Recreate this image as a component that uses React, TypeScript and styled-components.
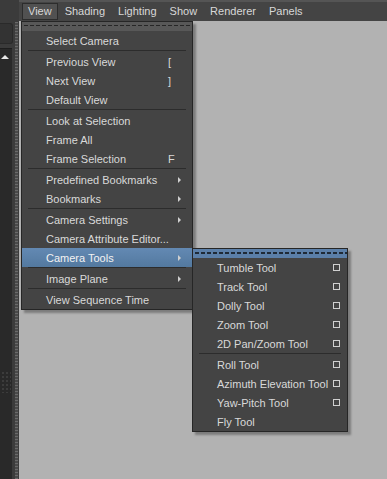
import styled, { createGlobalStyle } from 'styled-components';

const GlobalStyle = createGlobalStyle`
  html, body {
    margin: 0;
    padding: 0;
    background: #b2b2b2;
  }
  body {
    font-family: "Liberation Sans", Arial, sans-serif;
    font-size: 11px;
  }
`;

const Page = styled.div`
  position: relative;
  display: flex;
  width: 387px;
  height: 479px;
  overflow: hidden;
`;

const Dock = styled.div`
  display: flex;
  width: 19px;
  flex-shrink: 0;
  background: #3b3b3b;
`;

const DockColumn = styled.div`
  display: flex;
  flex-direction: column;
  width: 12px;
`;

const DockTop = styled.div`
  height: 23px;
`;

const DockButton = styled.div`
  height: 19px;
  margin-right: -1px;
  background: #333333;
  border: 1px solid #2a2a2a;
  border-left: none;
  border-radius: 0 3px 3px 0;
`;

const ScrollPanel = styled.div`
  flex: 1;
  margin-top: 4px;
  background: #292929;
  border-top: 1px solid #1e1e1e;
  display: flex;
  flex-direction: column;
  align-items: center;
  padding-top: 6px;
`;

const UpArrow = styled.div`
  width: 0;
  height: 0;
  margin-left: -3px;
  border-left: 4px solid transparent;
  border-right: 4px solid transparent;
  border-bottom: 4px solid #e8e8e8;
`;

const DotGrid = styled.div`
  margin-top: 312px;
  width: 10px;
  height: 22px;
  background-image: radial-gradient(#3c3c3c 0.8px, transparent 0.9px);
  background-size: 4px 4px;
`;

const Grip = styled.div`
  width: 3px;
  margin-left: 3px;
  margin-top: 22px;
  background-color: #4a4a4a;
  background-image: repeating-linear-gradient(
    to bottom,
    #6a6a6a 0px,
    #6a6a6a 1px,
    transparent 1px,
    transparent 3px
  );
`;

const Main = styled.div`
  flex: 1;
  display: flex;
  flex-direction: column;
`;

const MenuBar = styled.div`
  height: 21px;
  display: flex;
  align-items: center;
  gap: 1px;
  padding-left: 3px;
  background: #444444;
  border-top: 2px solid #555555;
  box-sizing: border-box;
`;

const BarItem = styled.div<{ $active?: boolean }>`
  height: 15px;
  line-height: 15px;
  padding: 0 5px;
  color: #d8d8d8;
  font-size: 11px;
  border: 1px solid ${(p) => (p.$active ? '#2c2c2c' : 'transparent')};
  background: ${(p) => (p.$active ? '#515151' : 'transparent')};
`;

const Viewport = styled.div`
  flex: 1;
  background: #b2b2b2;
`;

const Menu = styled.div<{ $left: number; $top: number; $width: number }>`
  position: absolute;
  left: ${(p) => p.$left}px;
  top: ${(p) => p.$top}px;
  width: ${(p) => p.$width}px;
  background: #444444;
  border: 1px solid #262626;
  box-shadow: 3px 3px 2px rgba(0, 0, 0, 0.3);
  display: flex;
  flex-direction: column;
  box-sizing: border-box;
`;

const TearOff = styled.div<{ $blue?: boolean }>`
  height: 9px;
  background-color: ${(p) => (p.$blue ? '#5b7fa8' : '#585858')};
  background-image: repeating-linear-gradient(
    to right,
    ${(p) => (p.$blue ? '#1f2a36' : '#262626')} 0px,
    ${(p) => (p.$blue ? '#1f2a36' : '#262626')} 4px,
    transparent 4px,
    transparent 6px
  );
  background-size: 100% ${(p) => (p.$blue ? 2 : 1)}px;
  background-position: 2px 3px;
  background-repeat: no-repeat;
`;

const Row = styled.div<{ $hot?: boolean; $indent: number }>`
  height: 19px;
  display: flex;
  align-items: center;
  padding-left: ${(p) => p.$indent}px;
  font-size: 11px;
  background: ${(p) => (p.$hot ? 'linear-gradient(#6389b3, #53799f)' : 'transparent')};
  color: ${(p) => (p.$hot ? '#f2f2f2' : '#d9d9d9')};
`;

const Label = styled.span`
  flex: 1;
  white-space: nowrap;
`;

const Shortcut = styled.span`
  width: 24px;
  color: #d9d9d9;
`;

const SubArrow = styled.span`
  width: 0;
  height: 0;
  margin-right: 11px;
  border-top: 3px solid transparent;
  border-bottom: 3px solid transparent;
  border-left: 3px solid #d0d0d0;
`;

const OptionBox = styled.span`
  width: 5px;
  height: 5px;
  margin-right: 7px;
  margin-left: 4px;
  border: 1px solid #d0d0d0;
`;

const Separator = styled.div<{ $inset: number }>`
  height: 2px;
  margin: 0 ${(p) => p.$inset}px;
  border-top: 1px solid #2c2c2c;
  box-sizing: border-box;
`;

type Entry =
  | { kind: 'sep' }
  | { kind: 'item'; label: string; key?: string; sub?: boolean; box?: boolean; hot?: boolean };

const viewMenu: Entry[] = [
  { kind: 'item', label: 'Select Camera' },
  { kind: 'sep' },
  { kind: 'item', label: 'Previous View', key: '[' },
  { kind: 'item', label: 'Next View', key: ']' },
  { kind: 'item', label: 'Default View' },
  { kind: 'sep' },
  { kind: 'item', label: 'Look at Selection' },
  { kind: 'item', label: 'Frame All' },
  { kind: 'item', label: 'Frame Selection', key: 'F' },
  { kind: 'sep' },
  { kind: 'item', label: 'Predefined Bookmarks', sub: true },
  { kind: 'item', label: 'Bookmarks', sub: true },
  { kind: 'sep' },
  { kind: 'item', label: 'Camera Settings', sub: true },
  { kind: 'item', label: 'Camera Attribute Editor...' },
  { kind: 'item', label: 'Camera Tools', sub: true, hot: true },
  { kind: 'sep' },
  { kind: 'item', label: 'Image Plane', sub: true },
  { kind: 'sep' },
  { kind: 'item', label: 'View Sequence Time' },
];

const toolsMenu: Entry[] = [
  { kind: 'item', label: 'Tumble Tool', box: true },
  { kind: 'item', label: 'Track Tool', box: true },
  { kind: 'item', label: 'Dolly Tool', box: true },
  { kind: 'item', label: 'Zoom Tool', box: true },
  { kind: 'item', label: '2D Pan/Zoom Tool', box: true },
  { kind: 'sep' },
  { kind: 'item', label: 'Roll Tool', box: true },
  { kind: 'item', label: 'Azimuth Elevation Tool', box: true },
  { kind: 'item', label: 'Yaw-Pitch Tool', box: true },
  { kind: 'item', label: 'Fly Tool' },
];

const MenuList = ({ entries, indent, inset }: { entries: Entry[]; indent: number; inset: number }) => (
  <>
    {entries.map((e, i) =>
      e.kind === 'sep' ? (
        <Separator key={i} $inset={inset} />
      ) : (
        <Row key={i} $hot={e.hot} $indent={indent}>
          <Label>{e.label}</Label>
          {e.key && <Shortcut>{e.key}</Shortcut>}
          {e.sub && <SubArrow />}
          {e.box && <OptionBox />}
        </Row>
      )
    )}
  </>
);

const App = () => {
  return (
    <>
      <GlobalStyle />
      <Page>
        <Dock>
          <DockColumn>
            <DockTop />
            <DockButton />
            <ScrollPanel>
              <UpArrow />
              <DotGrid />
            </ScrollPanel>
          </DockColumn>
          <Grip />
        </Dock>
        <Main>
          <MenuBar>
            <BarItem $active>View</BarItem>
            <BarItem>Shading</BarItem>
            <BarItem>Lighting</BarItem>
            <BarItem>Show</BarItem>
            <BarItem>Renderer</BarItem>
            <BarItem>Panels</BarItem>
          </MenuBar>
          <Viewport />
        </Main>
        <Menu $left={21} $top={21} $width={172}>
          <TearOff />
          <MenuList entries={viewMenu} indent={24} inset={6} />
        </Menu>
        <Menu $left={192} $top={248} $width={156}>
          <TearOff $blue />
          <MenuList entries={toolsMenu} indent={24} inset={6} />
        </Menu>
      </Page>
    </>
  );
};

export default App;
